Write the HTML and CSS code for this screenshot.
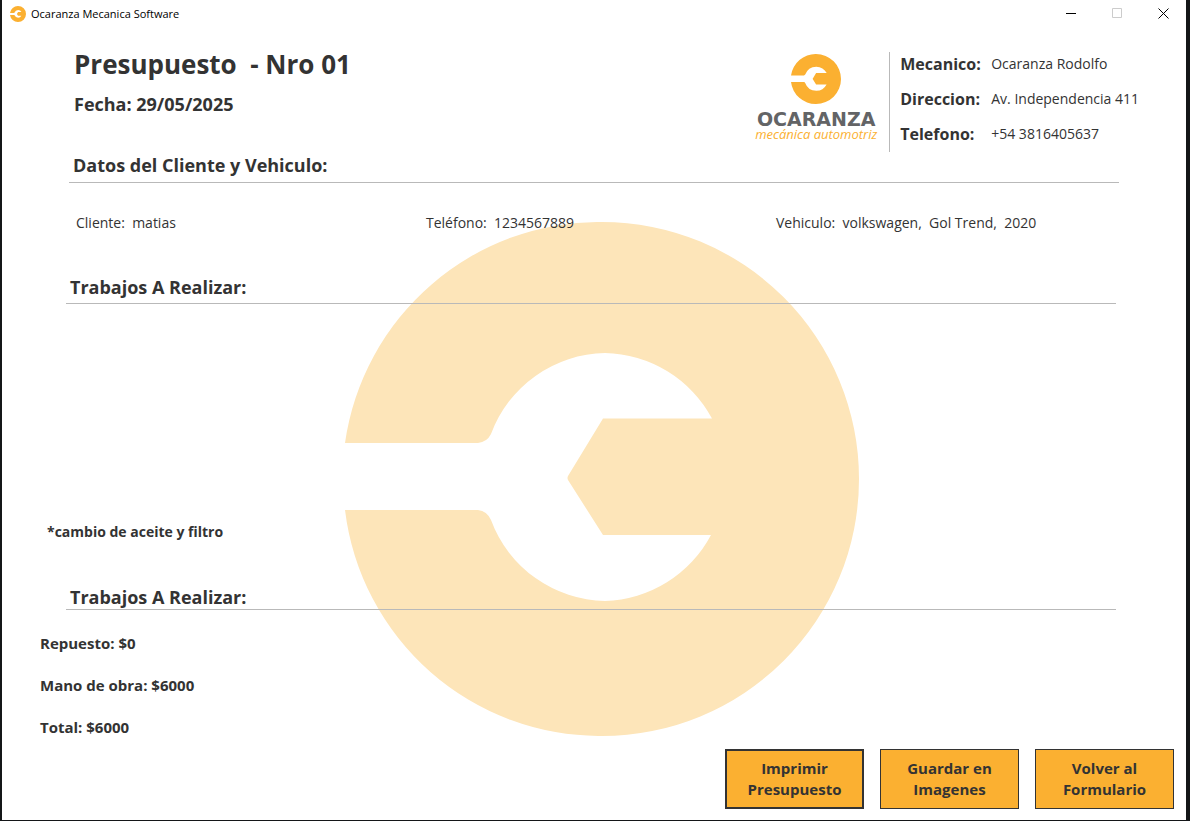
FILE: index.html
```html
<!DOCTYPE html>
<html lang="es">
<head>
<meta charset="utf-8">
<title>Ocaranza Mecanica Software</title>
<link rel="stylesheet" href="styles.css">
</head>
<body>
<svg class="defs" aria-hidden="true">
  <symbol id="wrench" viewBox="0 0 514 514">
    <path d="M0 221 A257 257 0 0 1 257 0 A257 257 0 0 1 514 257 A257 257 0 0 1 257 514 A257 257 0 0 1 0 288 H133 Q142 289 146 298 A124 124 0 0 0 260 379 A124 124 0 0 0 366 313 H258 L223 258 Q222 256 223 254 L258 196.500 H367 A124 124 0 0 0 260 131 A124 124 0 0 0 146 212 Q142 220 133 221 Z"/>
  </symbol>
</svg>
<div class="window">
  <svg class="watermark" aria-hidden="true"><use href="#wrench"/></svg>
  <header class="titlebar">
    <svg class="app-icon" aria-hidden="true"><use href="#wrench"/></svg>
    <span class="app-title">Ocaranza Mecanica Software</span>
    <div class="controls">
      <button type="button" aria-label="Minimizar"><svg viewBox="0 0 11 11"><path d="M0 5.500H10"/></svg></button>
      <button type="button" aria-label="Maximizar" disabled><svg viewBox="0 0 11 11"><path d="M.5 .5H9.500V9.500H.5Z"/></svg></button>
      <button type="button" aria-label="Cerrar"><svg viewBox="0 0 11 11"><path d="M.5 .5L10.500 10.500M10.500 .5L.5 10.500"/></svg></button>
    </div>
  </header>
  <main class="budget">
    <div class="masthead">
      <div class="heading">
        <h1>Presupuesto  - Nro 01</h1>
        <p class="date">Fecha: 29/05/2025</p>
      </div>
      <div class="brand">
        <svg class="brand-mark" aria-hidden="true"><use href="#wrench"/></svg>
        <span class="brand-name">OCARANZA</span>
        <span class="brand-tag">mecánica automotriz</span>
      </div>
      <dl class="contact">
        <dt>Mecanico:</dt><dd>Ocaranza Rodolfo</dd>
        <dt>Direccion:</dt><dd>Av. Independencia 411</dd>
        <dt>Telefono:</dt><dd>+54 3816405637</dd>
      </dl>
    </div>
    <section class="client">
      <h2>Datos del Cliente y Vehiculo:</h2>
      <div class="client-row">
        <span>Cliente:  matias</span>
        <span>Teléfono:  1234567889</span>
        <span>Vehiculo:  volkswagen,  Gol Trend,  2020</span>
      </div>
    </section>
    <section class="work">
      <h2>Trabajos A Realizar:</h2>
      <p class="work-item">*cambio de aceite y filtro</p>
    </section>
    <section class="costs">
      <h2>Trabajos A Realizar:</h2>
      <div class="totals">
        <p>Repuesto: $0</p>
        <p>Mano de obra: $6000</p>
        <p>Total: $6000</p>
      </div>
    </section>
  </main>
  <footer class="actions">
    <button type="button" class="action primary">Imprimir Presupuesto</button>
    <button type="button" class="action">Guardar en Imagenes</button>
    <button type="button" class="action">Volver al Formulario</button>
  </footer>
</div>
</body>
</html>
```
FILE: styles.css
```css
* { box-sizing: border-box; }
body {
  margin: 0;
  min-height: 100vh;
  display: flex;
  padding: 0 4px 1px 2px;
  background: #141618;
  color: #333;
  font-family: "Open Sans", "Noto Sans", sans-serif;
  font-size: 14px;
  line-height: 24px;
}
h1, h2, p, dl, dd { margin: 0; }
.defs { position: absolute; width: 0; height: 0; }
.window {
  position: relative;
  flex: 1;
  display: flex;
  flex-direction: column;
  background: #fff;
}
.watermark {
  position: absolute;
  top: 222px;
  left: 29%;
  width: 514px;
  height: 514px;
  fill: #fde5b9;
}
.titlebar, .budget, .actions { position: relative; }

.titlebar {
  display: flex;
  align-items: center;
  gap: 5px;
  height: 27px;
  padding-left: 8px;
}
.app-icon { width: 16px; height: 16px; fill: #fbb031; }
.app-title { color: #000; font-size: 11px; line-height: 16px; }
.controls { display: flex; margin-left: auto; }
.controls button {
  display: flex;
  align-items: center;
  justify-content: center;
  width: 46px;
  height: 27px;
  padding: 0;
  border: 0;
  background: none;
}
.controls svg { width: 11px; height: 11px; fill: none; stroke: #000; }
.controls button:disabled svg { stroke: #ccc; }

.budget {
  flex: 1;
  display: flex;
  flex-direction: column;
  padding: 19px 70px 0 64px;
}
.masthead { display: flex; align-items: flex-start; }
.heading { flex: 1; padding-left: 8px; }
h1 {
  font-size: 26px;
  line-height: 36px;
  white-space: pre-wrap;
}
.date { margin-top: 10px; font-size: 18px; font-weight: 700; }
.brand {
  display: flex;
  flex-direction: column;
  align-items: center;
  padding: 8px 12px 0 0;
}
.brand-mark { width: 50px; height: 50px; fill: #fbb031; }
.brand-name {
  margin-top: 6px;
  color: #636466;
  font: 700 19px/18px "DejaVu Sans", sans-serif;
}
.brand-tag { color: #fbb031; font-size: 13px; font-style: italic; line-height: 12px; }
.contact {
  display: grid;
  grid-template-columns: 80px auto;
  align-content: start;
  gap: 11px;
  height: 100px;
  margin: 6px -23px 0 0;
  padding-left: 10px;
  border-left: 1px solid #b9b9b9;
}
.contact dt { font-size: 16px; font-weight: 700; }

h2 {
  padding-left: 4px;
  border-bottom: 1px solid #b9b9b9;
  font-size: 18px;
  line-height: 24px;
}
.client { margin: 0 -3px 0 3px; padding-top: 1px; }
.client h2 { padding-bottom: 5px; }
.client-row {
  display: grid;
  grid-template-columns: repeat(3, 1fr);
  padding: 28px 0 0 7px;
  margin-right: -7px;
  white-space: pre-wrap;
}
.work {
  flex: 1;
  display: flex;
  flex-direction: column;
  justify-content: space-between;
  padding: 40px 0 41px;
}
.work h2 { padding-bottom: 4px; }
.work-item { margin-left: -19px; font-weight: 700; }
.totals {
  display: flex;
  flex-direction: column;
  gap: 18px;
  margin-left: -26px;
  padding: 21px 0 10px;
  font-size: 15px;
  font-weight: 700;
}
.actions {
  display: flex;
  justify-content: flex-end;
  gap: 16px;
  padding: 0 12px 11px;
}
.action {
  width: 139px;
  height: 60px;
  padding: 0 16px;
  border: 1px solid #333;
  background: #fbb031;
  color: #333;
  font: 700 15px/21px "Open Sans", "Noto Sans", sans-serif;
}
.primary { border-width: 2px; }
```
